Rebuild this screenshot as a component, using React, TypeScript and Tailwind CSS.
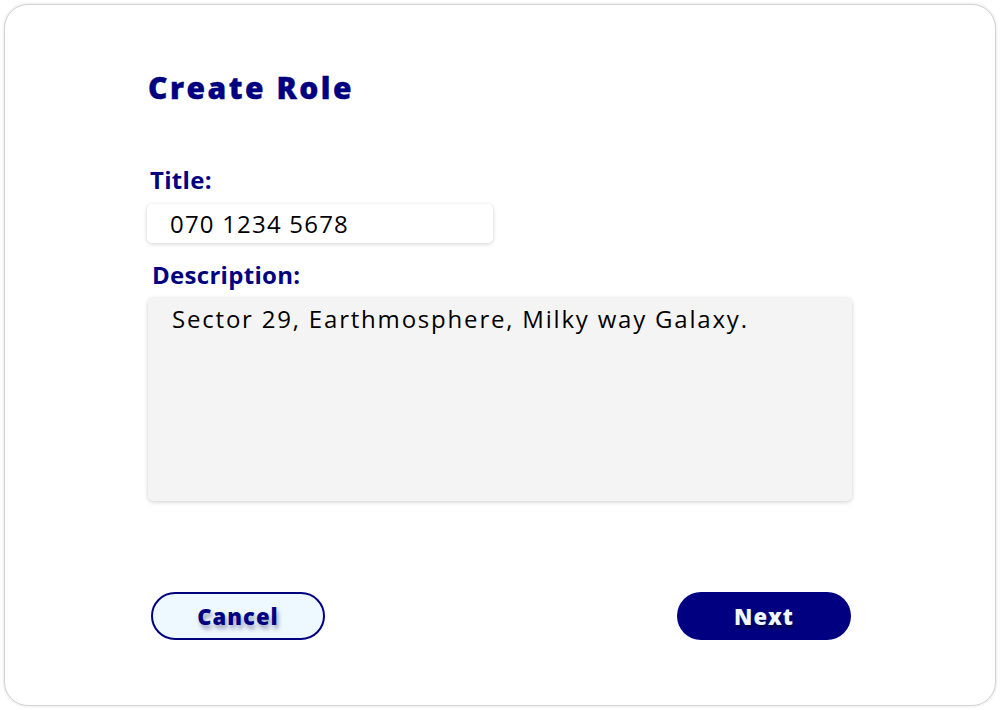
export default function App() {
  const font = { fontFamily: '"Open Sans", "Noto Sans", sans-serif' };

  return (
    <div className="w-[1000px] h-[710px] bg-white p-[4px]" style={font}>
      <div className="w-[992px] h-[702px] rounded-[24px] border border-[#d4d4d4] bg-white shadow-[0_0_3px_rgba(0,0,0,0.15)] pl-[143px] pt-[63px] flex flex-col">
        {/* Heading */}
        <h1 className="text-[30px] leading-[40px] font-extrabold text-[#000080] tracking-[2.5px] [-webkit-text-stroke:0.4px_#000080]">
          Create Role
        </h1>

        {/* Title */}
        <label className="mt-[58px] ml-[2px] text-[24px] leading-[28px] font-bold text-[#000080] tracking-[0.3px]">
          Title:
        </label>
        <div className="mt-[10px] -ml-[1px] w-[346px] h-[39px] rounded-[5px] bg-white shadow-[0_1px_4px_rgba(0,0,0,0.18)] flex items-center pl-[23px]">
          <span className="text-[24px] leading-[30px] text-black tracking-[1.2px]">070 1234 5678</span>
        </div>

        {/* Description */}
        <label className="mt-[17px] ml-[4px] text-[24px] leading-[30px] font-bold text-[#000080] tracking-[0.3px]">
          Description:
        </label>
        <div className="mt-[8px] w-[704px] h-[203px] rounded-[5px] bg-[#f4f4f4] shadow-[0_1px_4px_rgba(0,0,0,0.2)] pl-[24px] pt-[3px]">
          <span className="text-[24px] leading-[36px] text-black tracking-[1.8px]">
            Sector 29, Earthmosphere, Milky way Galaxy.
          </span>
        </div>

        {/* Actions */}
        <div className="mt-[91px] ml-[3px] w-[700px] flex justify-between">
          <button className="w-[174px] h-[48px] rounded-full border-[2px] border-[#000080] bg-[#eef8ff] text-[22px] font-extrabold text-[#000080] tracking-[1px] [text-shadow:2px_4px_4px_rgba(0,0,60,0.35)]">
            Cancel
          </button>
          <button className="w-[174px] h-[48px] rounded-full bg-[#000080] text-[22px] font-extrabold text-[#eef8ff] tracking-[1px] [text-shadow:1px_3px_3px_rgba(0,0,0,0.45)]">
            Next
          </button>
        </div>
      </div>
    </div>
  );
}
